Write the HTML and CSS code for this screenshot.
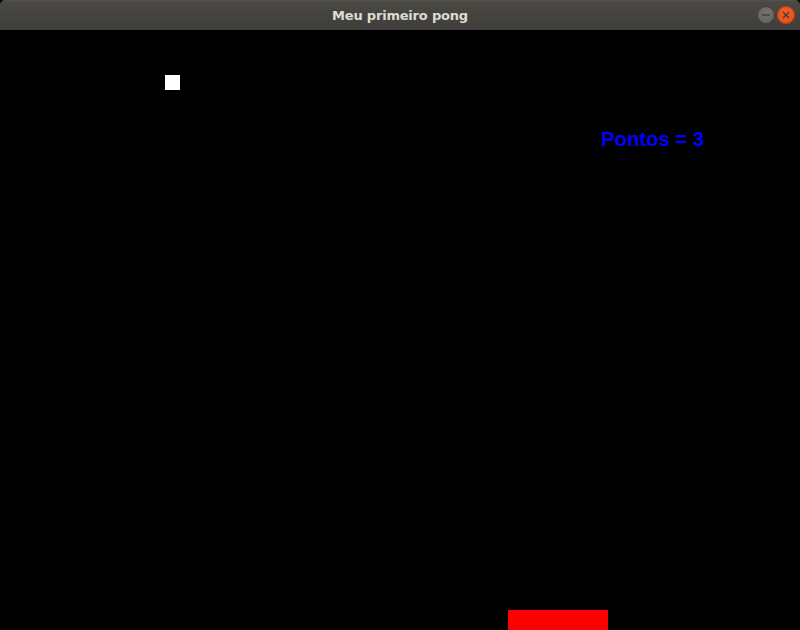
FILE: index.html
```html
<!DOCTYPE html>
<html lang="pt">
<head>
<meta charset="utf-8">
<title>Meu primeiro pong</title>
<link rel="stylesheet" href="styles.css">
</head>
<body>
<div class="window">
  <header class="titlebar">
    <span class="title">Meu primeiro pong</span>
    <div class="controls">
      <span class="btn btn-min">
        <svg width="18" height="18" viewBox="0 0 18 18"><line x1="5" y1="9" x2="13" y2="9" stroke="#3c3b37" stroke-width="1.3"/></svg>
      </span>
      <span class="btn btn-close">
        <svg width="18" height="18" viewBox="0 0 18 18"><path d="M6 6 L12 12 M12 6 L6 12" stroke="#3c3b37" stroke-width="1.3" fill="none"/></svg>
      </span>
    </div>
  </header>
  <main class="canvas">
    <div class="ball"></div>
    <div class="score">Pontos = 3</div>
    <div class="paddle"></div>
  </main>
</div>
</body>
</html>
```
FILE: styles.css
```css
html, body {
  margin: 0;
  padding: 0;
  background: #000;
}
.window {
  width: 800px;
  height: 630px;
  display: flex;
  flex-direction: column;
  overflow: hidden;
}
.titlebar {
  height: 30px;
  flex: 0 0 30px;
  background: linear-gradient(#57544e 0, #4a4843 2px, #3f3e3a 100%);
  border-radius: 5px 5px 0 0;
  display: flex;
  align-items: center;
  justify-content: center;
  position: relative;
}
.title {
  font-family: "DejaVu Sans", "Noto Sans", sans-serif;
  font-weight: bold;
  font-size: 13px;
  letter-spacing: -0.2px;
  color: #dfdbd2;
}
.controls {
  position: absolute;
  right: 5px;
  top: 6px;
  display: flex;
  gap: 2px;
}
.btn {
  width: 18px;
  height: 18px;
  border-radius: 50%;
  display: block;
}
.btn svg { display: block; }
.btn-min {
  background: radial-gradient(circle at 50% 40%, #75746f, #5f5e5a);
  box-shadow: inset 0 0 0 1px #3a3935;
}
.btn-close {
  background: radial-gradient(circle at 50% 40%, #f0642c, #df4a16);
  box-shadow: inset 0 0 0 1px #b33a0e;
}
.canvas {
  flex: 1;
  background: #000;
  position: relative;
}
.ball {
  position: absolute;
  left: 165px;
  top: 45px;
  width: 15px;
  height: 15px;
  background: #fff;
}
.score {
  position: absolute;
  left: 601px;
  top: 98px;
  font-family: "Liberation Sans", Arial, sans-serif;
  font-weight: bold;
  font-size: 20.3px;
  color: #0000ff;
}
.paddle {
  position: absolute;
  left: 508px;
  top: 580px;
  width: 100px;
  height: 20px;
  background: #ff0000;
}
```
